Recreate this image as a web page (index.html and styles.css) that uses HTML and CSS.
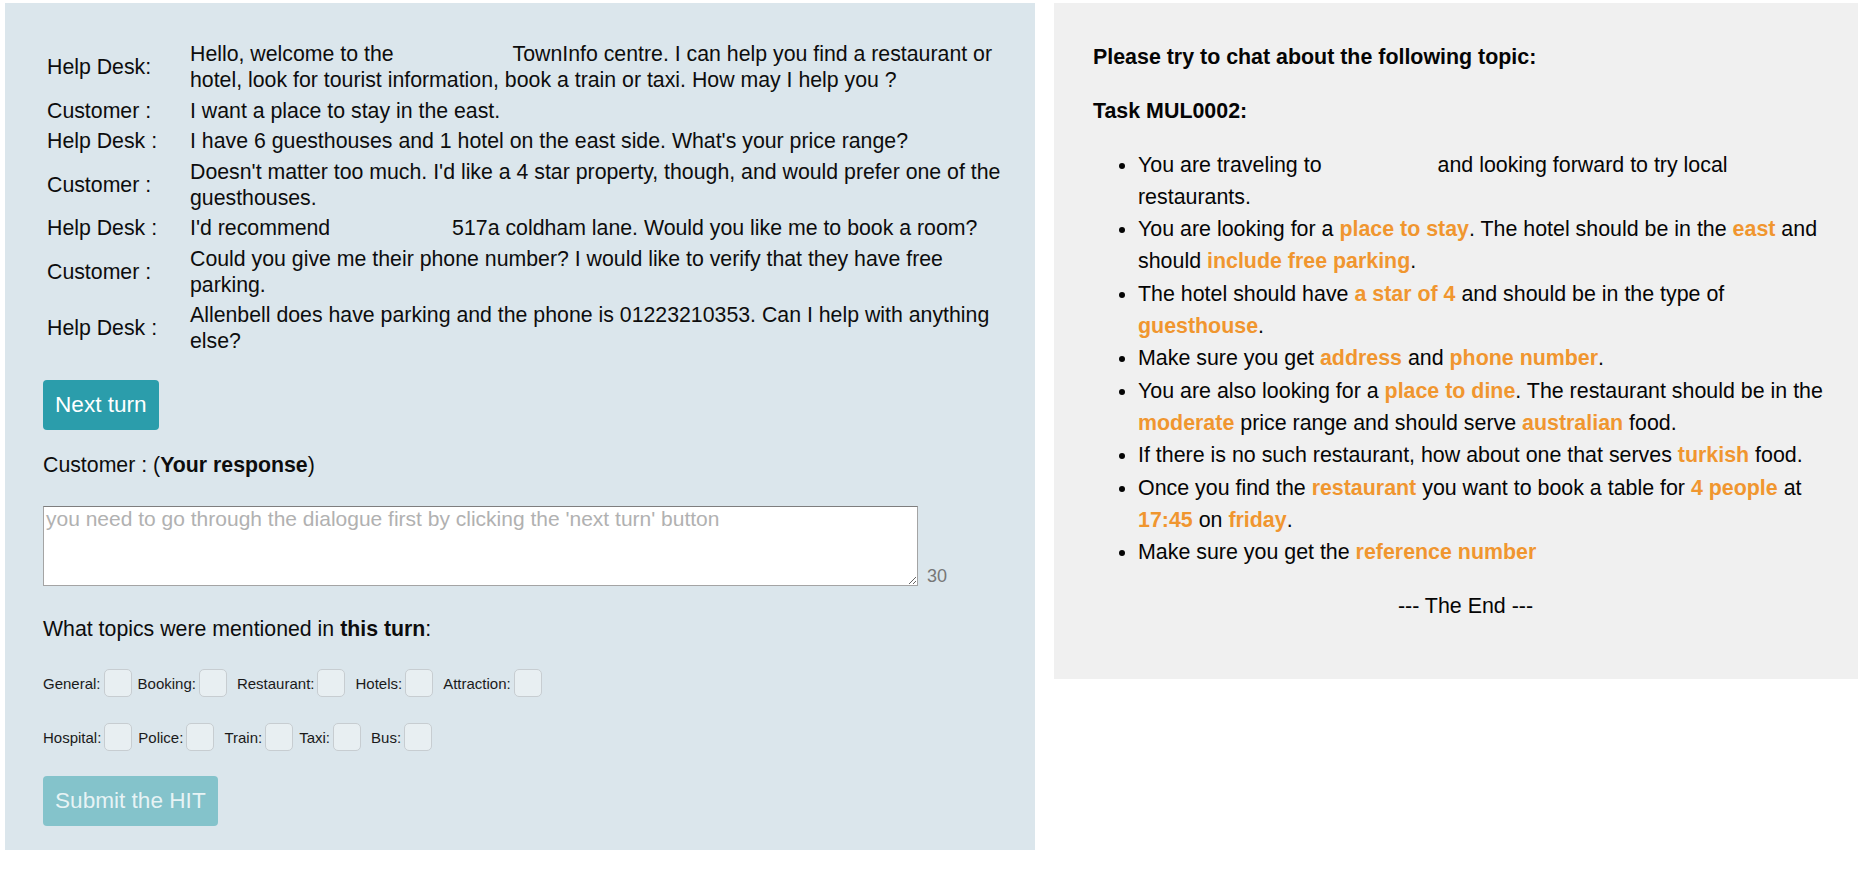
FILE: index.html
```html
<!DOCTYPE html>
<html lang="en">
<head>
<meta charset="utf-8">
<title>Dialogue task</title>
<link rel="stylesheet" href="styles.css">
</head>
<body>
<div class="page">
  <section class="chat-panel">
    <div class="dialogue">
      <div class="speaker">Help Desk:</div>
      <div class="utterance">Hello, welcome to the <span class="gap gap-town">TownInfo</span> centre. I can help you find a restaurant or hotel, look for tourist information, book a train or taxi. How may I help you ?</div>
      <div class="speaker">Customer :</div>
      <div class="utterance">I want a place to stay in the east.</div>
      <div class="speaker">Help Desk :</div>
      <div class="utterance">I have 6 guesthouses and 1 hotel on the east side. What's your price range?</div>
      <div class="speaker">Customer :</div>
      <div class="utterance">Doesn't matter too much. I'd like a 4 star property, though, and would prefer one of the guesthouses.</div>
      <div class="speaker">Help Desk :</div>
      <div class="utterance">I'd recommend <span class="gap gap-hotel">517a</span> coldham lane. Would you like me to book a room?</div>
      <div class="speaker">Customer :</div>
      <div class="utterance">Could you give me their phone number? I would like to verify that they have free parking.</div>
      <div class="speaker">Help Desk :</div>
      <div class="utterance">Allenbell does have parking and the phone is 01223210353. Can I help with anything else?</div>
    </div>

    <button class="btn btn-next" type="button">Next turn</button>

    <p class="prompt">Customer : (<b>Your response</b>)</p>

    <div class="response-row">
      <textarea class="response" placeholder="you need to go through the dialogue first by clicking the 'next turn' button"></textarea>
      <span class="counter">30</span>
    </div>

    <p class="topics-q">What topics were mentioned in <b>this turn</b>:</p>

    <div class="topics">
      <label class="topic">General:<span class="box"></span></label>
      <label class="topic">Booking:<span class="box"></span></label>
      <label class="topic wide">Restaurant:<span class="box"></span></label>
      <label class="topic wide">Hotels:<span class="box"></span></label>
      <label class="topic wide">Attraction:<span class="box"></span></label>
    </div>
    <div class="topics second">
      <label class="topic">Hospital:<span class="box"></span></label>
      <label class="topic">Police:<span class="box"></span></label>
      <label class="topic wide">Train:<span class="box"></span></label>
      <label class="topic">Taxi:<span class="box"></span></label>
      <label class="topic wide">Bus:<span class="box"></span></label>
    </div>

    <button class="btn btn-submit" type="button">Submit the HIT</button>
  </section>

  <section class="task-panel">
    <p class="task-title">Please try to chat about the following topic:</p>
    <p class="task-title">Task MUL0002:</p>
    <ul class="task-list">
      <li>You are traveling to <span class="gap gap-city">and</span> looking forward to try local restaurants.</li>
      <li>You are looking for a <span class="hl">place to stay</span>. The hotel should be in the <span class="hl">east</span> and should <span class="hl">include free parking</span>.</li>
      <li>The hotel should have <span class="hl">a star of 4</span> and should be in the type of <span class="hl">guesthouse</span>.</li>
      <li>Make sure you get <span class="hl">address</span> and <span class="hl">phone number</span>.</li>
      <li>You are also looking for a <span class="hl">place to dine</span>. The restaurant should be in the <span class="hl">moderate</span> price range and should serve <span class="hl">australian</span> food.</li>
      <li>If there is no such restaurant, how about one that serves <span class="hl">turkish</span> food.</li>
      <li>Once you find the <span class="hl">restaurant</span> you want to book a table for <span class="hl">4 people</span> at <span class="hl">17:45</span> on <span class="hl">friday</span>.</li>
      <li>Make sure you get the <span class="hl">reference number</span></li>
    </ul>
    <p class="end">--- The End ---</p>
  </section>
</div>
</body>
</html>
```

FILE: styles.css
```css
* {
  box-sizing: border-box;
}

html,
body {
  margin: 0;
  background: #ffffff;
}

body {
  font-family: "Liberation Sans", Arial, Helvetica, sans-serif;
  font-size: 21.3px;
  color: #0d0d0d;
}

.page {
  display: flex;
  align-items: flex-start;
  gap: 19px;
  padding: 3px 4px 0 5px;
}

/* ---------- left panel ---------- */
.chat-panel {
  width: 1030px;
  flex: none;
  background: #dbe6ec;
  padding: 38px 15px 24px 38px;
  display: flex;
  flex-direction: column;
  align-items: flex-start;
}

.dialogue {
  width: 100%;
  display: grid;
  grid-template-columns: 147px 1fr;
  row-gap: 4.5px;
  line-height: 26px;
}

.speaker {
  padding-left: 4px;
  align-self: center;
}

/* blank space left where a name was removed from the text */
.gap-town {
  margin-left: 113px;
}

.gap-hotel {
  margin-left: 116px;
}

.gap-city {
  margin-left: 110px;
}

.btn {
  font-family: inherit;
  font-size: 22.6px;
  height: 50px;
  line-height: 50px;
  padding: 0 12px;
  border: none;
  border-radius: 4px;
  color: #ffffff;
  cursor: pointer;
}

.btn-next {
  margin-top: 26px;
  background: #2b9dab;
}

.btn-submit {
  margin-top: 25px;
  background: #84c3cb;
  color: rgba(255, 255, 255, 0.82);
}

.prompt {
  margin: 22px 0 0;
  line-height: 26px;
}

.response-row {
  margin-top: 28px;
  display: flex;
  align-items: flex-end;
}

.response {
  width: 875px;
  height: 80px;
  margin: 0;
  padding: 1px 2px;
  font-family: inherit;
  font-size: 21px;
  line-height: 22px;
  background: #ffffff;
  border: 1px solid #a4a4a4;
  border-top-color: #7e7e7e;
  border-radius: 0;
  resize: both;
}

.response::placeholder {
  color: #b1b1b1;
}

.counter {
  margin-left: 9px;
  font-size: 18px;
  line-height: 20px;
  color: #777777;
}

.topics-q {
  margin: 30px 0 0;
  line-height: 26px;
}

.topics {
  display: flex;
  align-items: center;
  margin-top: 27px;
  font-size: 15px;
  color: #1a1a1a;
}

.topics.second {
  margin-top: 26px;
}

.topic {
  display: flex;
  align-items: center;
}

.topic + .topic {
  margin-left: 6px;
}

.topic.wide {
  margin-left: 10px;
}

.box {
  width: 28px;
  height: 28px;
  margin-left: 3px;
  border: 1.5px solid #c7cdd1;
  border-radius: 5px;
  background: #e8eff2;
}

/* ---------- right panel ---------- */
.task-panel {
  width: 804px;
  flex: none;
  background: #f0f0f0;
  padding: 38px 20px 57px 39px;
  font-size: 21.4px;
  line-height: 32.3px;
  color: #050505;
}

.task-panel p {
  margin: 0 0 21.5px;
}

.task-title {
  font-weight: bold;
}

.task-list {
  margin: 0 0 21.5px;
  padding-left: 45px;
}

.hl {
  color: #f0962f;
  font-weight: bold;
}

.task-panel .end {
  margin: 0;
  text-align: center;
}
```
